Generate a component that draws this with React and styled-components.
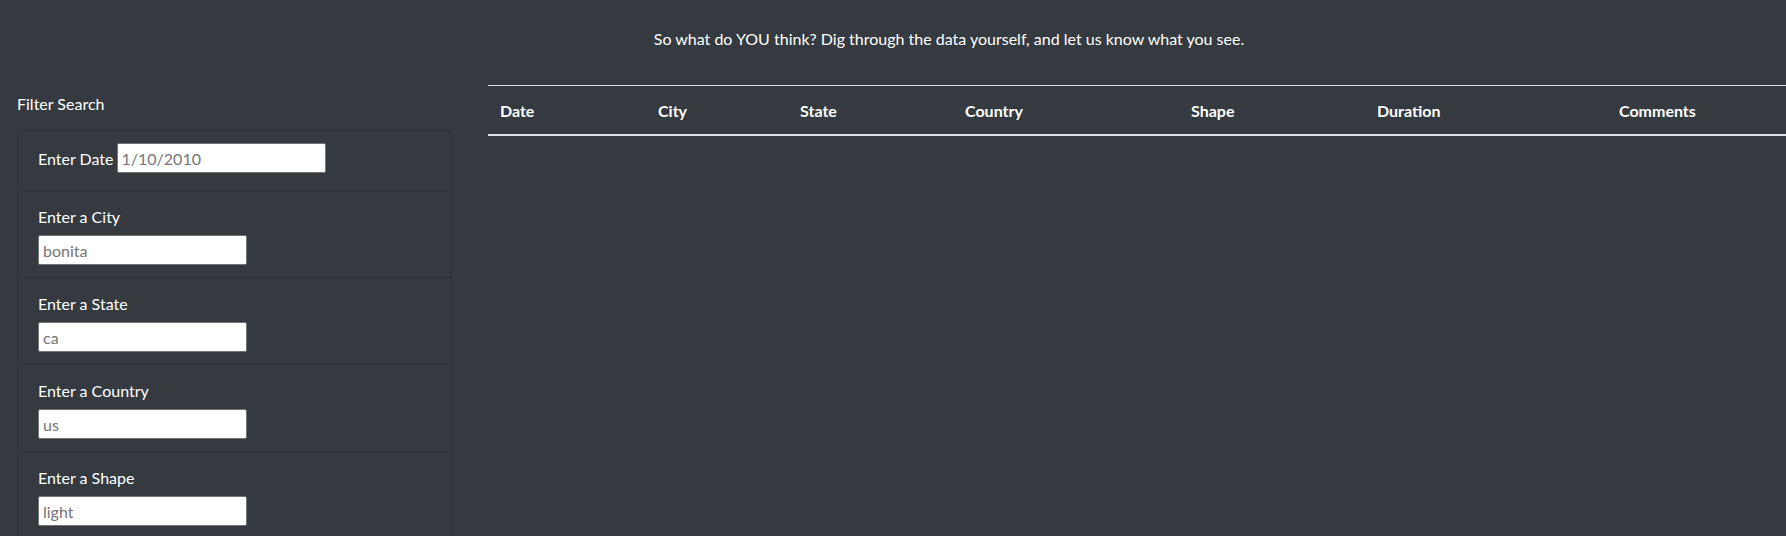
import React from "react";
import styled, { createGlobalStyle } from "styled-components";

const GlobalStyle = createGlobalStyle`
  html, body {
    margin: 0;
    padding: 0;
    background-color: #343a40;
    overflow: hidden;
  }
  body {
    font-family: Lato, "Open Sans", "Liberation Sans", sans-serif;
    font-size: 16px;
    line-height: 24px;
    color: #ffffff;
  }
`;

const Page = styled.div`
  width: 1786px;
  height: 536px;
  background-color: #343a40;
`;

const Intro = styled.p`
  margin: 0;
  padding: 27px 0 0 112px;
  text-align: center;
  line-height: 24px;
`;

const Main = styled.div`
  display: flex;
  margin-top: 34px;
`;

const Sidebar = styled.aside`
  width: 435px;
  padding: 7px 0 0 17px;
  flex-shrink: 0;
`;

const SidebarTitle = styled.div`
  line-height: 24px;
  margin-bottom: 14px;
`;

const FilterList = styled.ul`
  list-style: none;
  margin: 0;
  padding: 0;
  border: 1px solid rgba(0, 0, 0, 0.13);
  border-radius: 4px;
`;

const FilterItem = styled.li`
  padding: ${(p) => (p.$inline ? "12px 20px 17px" : "12px 20px")};
  border-top: 1px solid rgba(0, 0, 0, 0.13);
  display: ${(p) => (p.$inline ? "flex" : "block")};
  align-items: flex-start;

  &:first-child {
    border-top: none;
  }
`;

const Label = styled.label`
  display: ${(p) => (p.$inline ? "inline-block" : "block")};
  line-height: 24px;
  margin: ${(p) => (p.$inline ? "4px 3px 0 0" : "2px 0 6px 0")};
`;

const Input = styled.input`
  box-sizing: border-box;
  width: 209px;
  height: 30px;
  padding: 1px 4px 0;
  border: 1px solid #767676;
  border-radius: 2px;
  background: #ffffff;
  font-family: inherit;
  font-size: 16px;
  color: #495057;
  outline: none;

  &::placeholder {
    color: #757575;
    opacity: 1;
  }
`;

const TableWrap = styled.div`
  margin-left: 36px;
  flex: 1;
`;

const Table = styled.table`
  width: 1298px;
  border-collapse: collapse;
  table-layout: fixed;
  color: #ffffff;
`;

const Th = styled.th`
  width: ${(p) => p.$w}px;
  padding: 13px 12px 11px;
  text-align: left;
  font-weight: 700;
  line-height: 24px;
  border-top: 1px solid #dee2e6;
  border-bottom: 2px solid #dee2e6;
  box-sizing: border-box;
`;

const filters = [
  { id: "datetime", label: "Enter Date", placeholder: "1/10/2010", inline: true },
  { id: "city", label: "Enter a City", placeholder: "bonita" },
  { id: "state", label: "Enter a State", placeholder: "ca" },
  { id: "country", label: "Enter a Country", placeholder: "us" },
  { id: "shape", label: "Enter a Shape", placeholder: "light" },
];

const columns = [
  { name: "Date", w: 158 },
  { name: "City", w: 142 },
  { name: "State", w: 165 },
  { name: "Country", w: 226 },
  { name: "Shape", w: 186 },
  { name: "Duration", w: 242 },
  { name: "Comments", w: 179 },
];

export default function App() {
  return (
    <Page>
      <GlobalStyle />
      <Intro>
        So what do YOU think? Dig through the data yourself, and let us know what you see.
      </Intro>
      <Main>
        <Sidebar>
          <SidebarTitle>Filter Search</SidebarTitle>
          <FilterList>
            {filters.map((f) => (
              <FilterItem key={f.id} $inline={f.inline}>
                <Label htmlFor={f.id} $inline={f.inline}>
                  {f.label}
                </Label>
                <Input id={f.id} type="text" placeholder={f.placeholder} />
              </FilterItem>
            ))}
          </FilterList>
        </Sidebar>
        <TableWrap>
          <Table>
            <thead>
              <tr>
                {columns.map((c) => (
                  <Th key={c.name} $w={c.w}>
                    {c.name}
                  </Th>
                ))}
              </tr>
            </thead>
            <tbody />
          </Table>
        </TableWrap>
      </Main>
    </Page>
  );
}
